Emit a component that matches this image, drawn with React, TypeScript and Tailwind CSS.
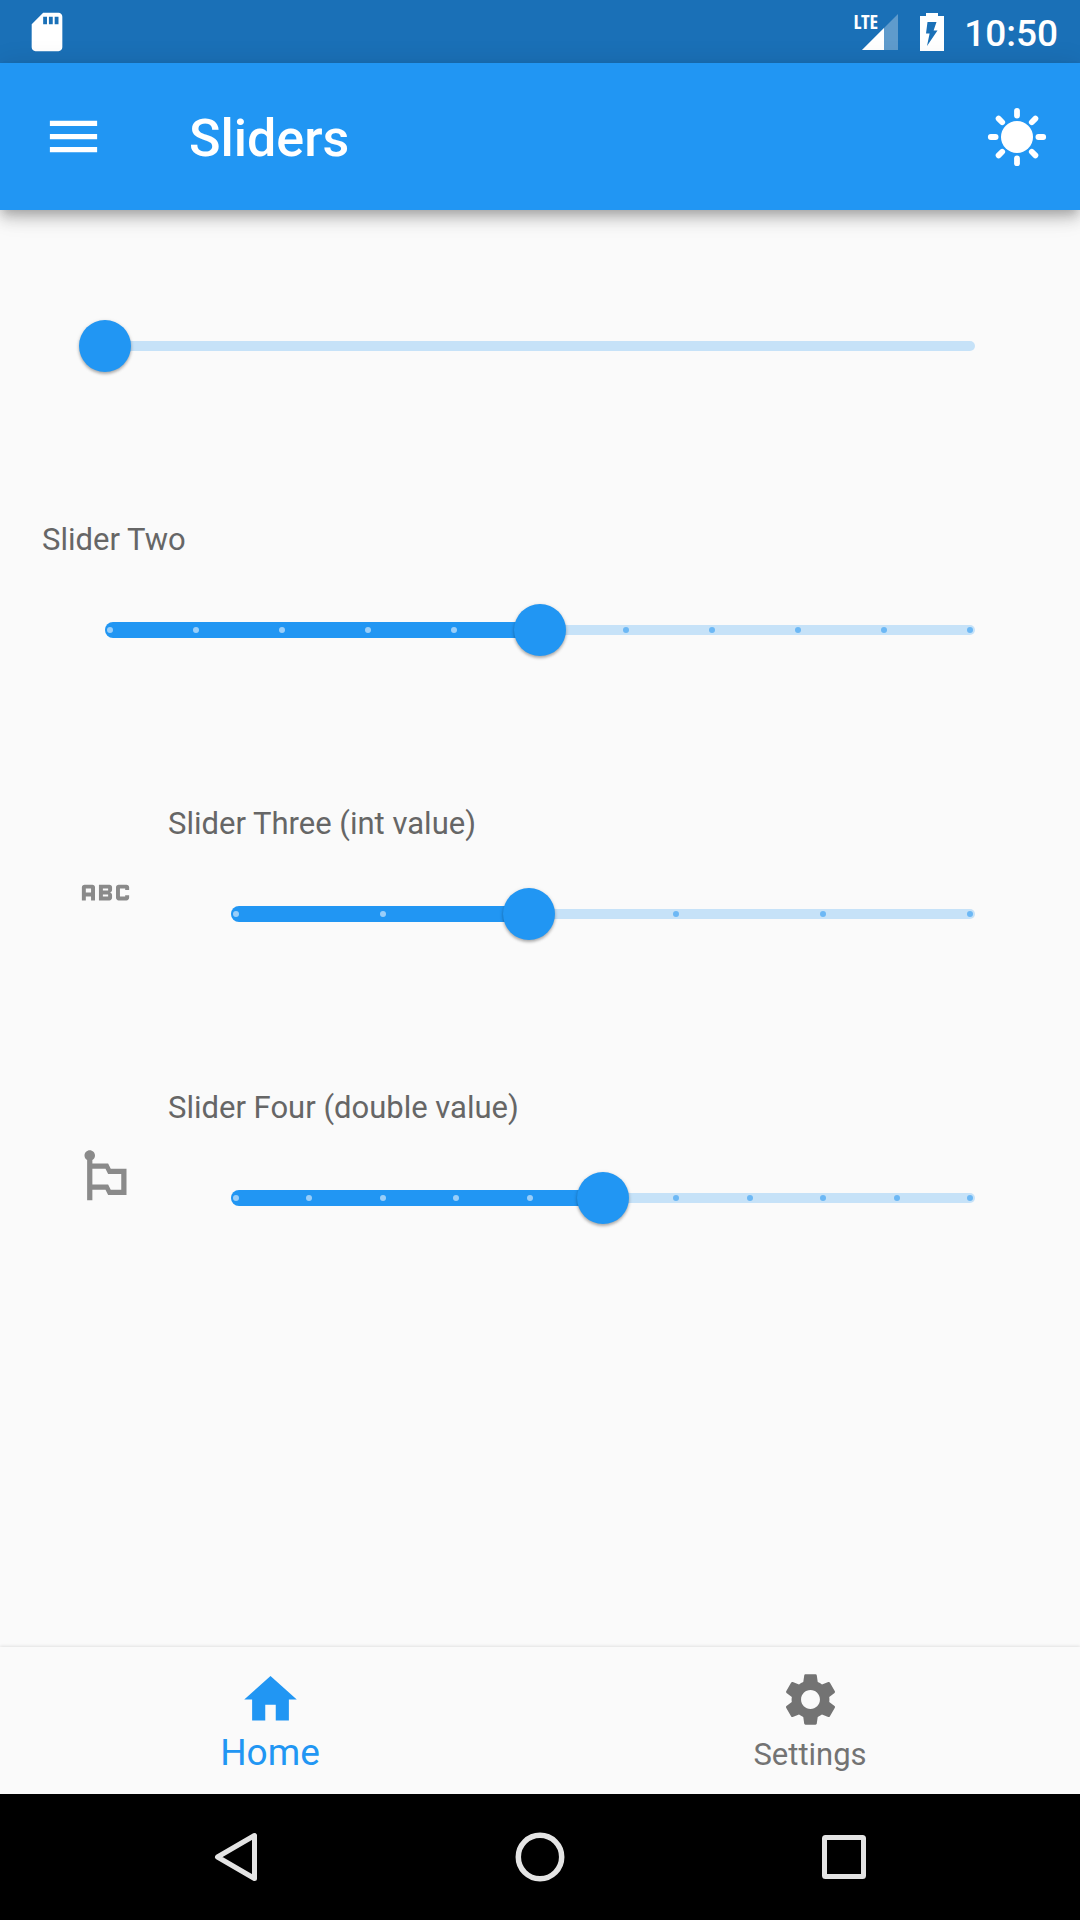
import { useId, useState } from "react";
import type { ReactNode } from "react";
import { MdAbc, MdHome, MdMenu, MdSdCard, MdSettings } from "react-icons/md";

function SunIcon() {
  const rays = [0, 90, 180, 270];
  return (
    <svg viewBox="-32 -32 64 64" className="size-16" fill="white" stroke="white" strokeLinecap="round" aria-hidden="true">
      <circle r="16" stroke="none" />
      {rays.map((angle) => (
        <g key={angle} transform={`rotate(${angle})`} strokeWidth="5.8">
          <path d="M0-21.4V-26.2" />
          <path d="M14.8-14.8L18.4-18.4" />
        </g>
      ))}
    </svg>
  );
}

function FlagIcon() {
  return (
    <svg viewBox="0 0 24 24" className="size-[63px]" fill="currentColor" aria-hidden="true">
      <path d="M14 9l-1-2H7V5.72C7.6 5.38 8 4.74 8 4c0-1.1-.9-2-2-2s-2 .9-2 2c0 .74.4 1.38 1 1.72V21h2v-4h5l1 2h7V9h-6zm4 8h-4l-1-2H7V9h5l1 2h5v6z" />
    </svg>
  );
}

function StatusBar() {
  return (
    <div className="flex h-[63px] items-center justify-between bg-[#1a70b7] pl-6 pr-[22px] text-white">
      <MdSdCard className="size-[46px]" aria-hidden="true" />
      <div className="flex items-center">
        <span className="relative mr-[22px]">
          <svg viewBox="0 0 36 36" className="size-9" fill="white" aria-hidden="true">
            <path d="M36 0V36H0z" fillOpacity=".3" />
            <path d="M22 14V36H0z" />
          </svg>
          <span className="absolute -top-0.5 right-5 font-['Open_Sans_Condensed','Roboto_Condensed','Liberation_Sans_Narrow',Roboto,sans-serif] text-xl leading-5 font-bold">
            LTE
          </span>
        </span>
        <svg viewBox="0 0 24 38" className="mr-5 h-[38px] w-6" aria-hidden="true">
          <path fill="white" d="M6 0H18V3H24V38H0V3H6z" />
          <path fill="#1a70b7" d="M7.5 9H16.5L13.6 17.5H17.5L7 33L9.6 20.5H6z" />
        </svg>
        <time className="pt-1 text-[37px] leading-none font-medium">10:50</time>
      </div>
    </div>
  );
}

type SliderProps = { id: string; label?: string; initial: number; max: number; divisions?: number };

function Slider({ id, label, initial, max, divisions }: SliderProps) {
  const [value, setValue] = useState(initial);
  const ratio = value / max;
  const ticks = divisions ? Array.from({ length: divisions + 1 }, (_, i) => i / divisions) : [];
  return (
    <div className="px-[63px]">
      <div className="relative flex h-[126px] items-center">
        <div className="h-2.5 w-full rounded-full bg-[#c6e2f8]" />
        <div
          className="absolute left-0 h-4 rounded-l-full bg-[#2196f3]"
          style={{ width: `${ratio * 100}%` }}
        />
        <div className="absolute inset-x-0.5 flex justify-between">
          {ticks.map((t) => (
            <span
              key={t}
              className={t < ratio ? "size-1.5 rounded-full bg-[#99cef9]" : "size-1.5 rounded-full bg-[#6db8f5]"}
            />
          ))}
        </div>
        <input
          id={id}
          type="range"
          aria-label={label}
          min={0}
          max={max}
          step={divisions ? max / divisions : "any"}
          value={value}
          onChange={(e) => setValue(Number(e.target.value))}
          className="absolute -inset-x-[26px] h-full cursor-pointer appearance-none bg-transparent outline-none [&::-webkit-slider-thumb]:size-[52px] [&::-webkit-slider-thumb]:appearance-none [&::-webkit-slider-thumb]:rounded-full [&::-webkit-slider-thumb]:bg-[#2196f3] [&::-webkit-slider-thumb]:shadow-[0_2px_3px_rgba(0,0,0,0.25),0_1px_4px_rgba(0,0,0,0.12)]"
        />
      </div>
    </div>
  );
}

type RowProps = { title?: string; icon?: ReactNode; initial: number; max: number; divisions?: number };

function SliderRow({ title, icon, ...slider }: RowProps) {
  const id = useId();
  return (
    <div className="flex items-center">
      {icon && <div className="flex w-[126px] shrink-0 justify-center pt-1 text-[#8a8a8a]">{icon}</div>}
      <div className="min-w-0 flex-1">
        {title && (
          <label htmlFor={id} className="mb-1.5 block text-[31px] leading-[42px] text-[#666]">
            {title}
          </label>
        )}
        <Slider id={id} label={title ? undefined : "Slider One"} {...slider} />
      </div>
    </div>
  );
}

export default function App() {
  return (
    <div className="flex min-h-screen flex-col bg-[#fafafa] font-[Roboto,sans-serif]">
      <StatusBar />
      <header className="relative z-10 flex h-[147px] items-center bg-[#2196f3] px-[31px] text-white shadow-[0_5px_10px_-3px_rgba(0,0,0,0.2),0_10px_13px_rgba(0,0,0,0.14),0_3px_26px_rgba(0,0,0,0.12)]">
        <button type="button" aria-label="Open menu" className="ml-[11px]">
          <MdMenu className="size-[63px]" />
        </button>
        <h1 className="ml-[84px] flex-1 pt-1 text-[52px] leading-none font-medium">Sliders</h1>
        <button type="button" aria-label="Toggle theme">
          <SunIcon />
        </button>
      </header>

      <main className="flex flex-1 flex-col gap-[110px] px-[42px] pt-[73px]">
        <SliderRow initial={0} max={1} />
        <SliderRow title="Slider Two" initial={5} max={10} divisions={10} />
        <SliderRow
          title="Slider Three (int value)"
          icon={<MdAbc className="size-[63px]" />}
          initial={2}
          max={5}
          divisions={5}
        />
        <SliderRow title="Slider Four (double value)" icon={<FlagIcon />} initial={5} max={10} divisions={10} />
      </main>

      <nav className="flex h-[147px] bg-[#fafafa] pt-[21px] text-center shadow-[0_-1px_3px_rgba(0,0,0,0.1)]">
        <a href="#home" aria-current="page" className="flex flex-1 flex-col items-center text-[#2196f3]">
          <MdHome className="size-[63px]" />
          <span className="text-[37px] leading-[44px]">Home</span>
        </a>
        <a href="#settings" className="flex flex-1 flex-col items-center text-[#737373]">
          <MdSettings className="size-[63px]" />
          <span className="text-[31px] leading-[48px]">Settings</span>
        </a>
      </nav>

      <div className="flex h-[126px] items-center bg-black px-[84px]">
        <button type="button" aria-label="Back" className="flex flex-1 justify-center">
          <svg viewBox="0 0 56 56" className="size-14" fill="none" stroke="#e4e4e4" strokeWidth="5" strokeLinejoin="round">
            <path d="M46.5 6.5V49.5L9.5 28z" />
          </svg>
        </button>
        <button type="button" aria-label="Home screen" className="flex flex-1 justify-center">
          <svg viewBox="0 0 56 56" className="size-14" fill="none" stroke="#e4e4e4" strokeWidth="5.5">
            <circle cx="28" cy="28" r="21.7" />
          </svg>
        </button>
        <button type="button" aria-label="Recent apps" className="flex flex-1 justify-center">
          <svg viewBox="0 0 56 56" className="size-14" fill="none" stroke="#e4e4e4" strokeWidth="5" strokeLinejoin="round">
            <rect x="8.5" y="8.5" width="39" height="39" rx="1" />
          </svg>
        </button>
      </div>
    </div>
  );
}
